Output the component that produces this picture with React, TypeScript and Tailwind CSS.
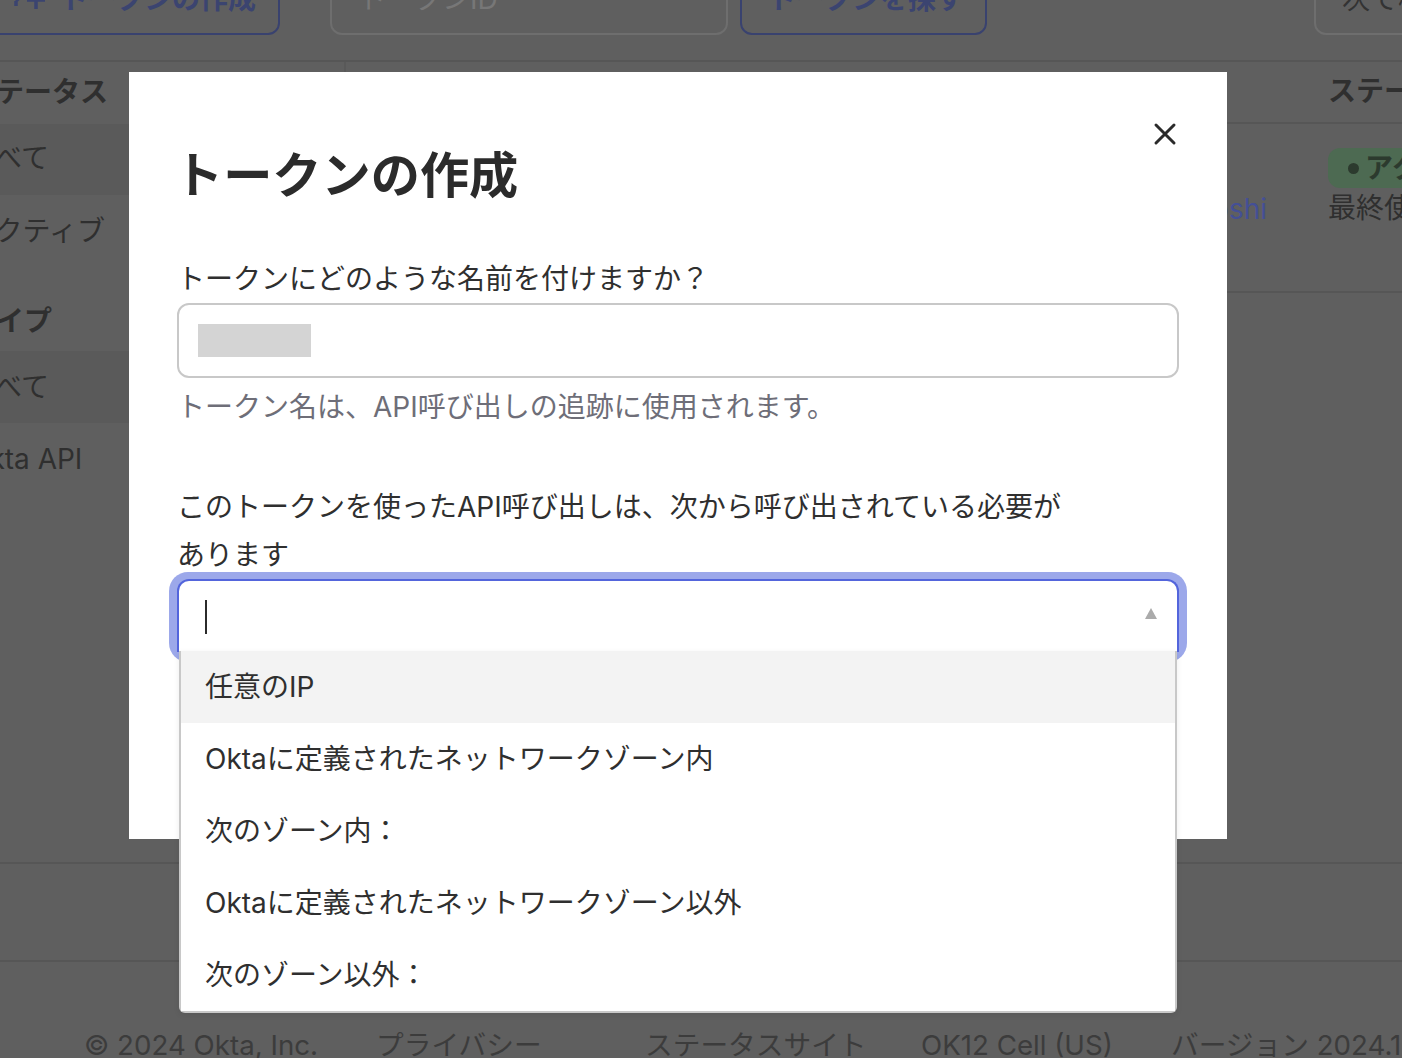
import React from "react";

const font = { fontFamily: '"Inter","Noto Sans CJK JP",sans-serif' };

function Options() {
  const items = [
    "任意のIP",
    "Oktaに定義されたネットワークゾーン内",
    "次のゾーン内：",
    "Oktaに定義されたネットワークゾーン以外",
    "次のゾーン以外：",
  ];
  return (
    <div className="absolute left-[2px] right-[2px] top-[72px] bg-white border-x-2 border-b-2 border-[#c8c8c8] rounded-b-[6px] shadow-[0_2px_6px_rgba(0,0,0,0.08)]">
      {items.map((t, i) => (
        <div key={t} className={`h-[72px] flex items-center pl-[24px] ${i === 0 ? "bg-[#f3f3f3]" : "bg-white"}`}>
          {t}
        </div>
      ))}
    </div>
  );
}

export default function App() {
  return (
    <div style={font} className="relative w-[1402px] h-[1058px] overflow-hidden bg-[#5f5f5f] text-[28px] text-[#2f2f2f]">
      <div className="flex flex-col h-[1095px] -mt-[37px] -ml-[32px] w-[1434px]">
        <div className="h-[99px] shrink-0 border-b-2 border-[#565656] flex items-start whitespace-nowrap">
          <div className="h-[72px] w-[316px] -ml-[4px] shrink-0 border-2 border-[#39426f] rounded-[12px] flex items-center pl-[48px] font-bold text-[#3b4470]">
            <svg className="mr-[14px] shrink-0" width="32" height="32" viewBox="0 0 32 32" fill="none" stroke="#3b4470" strokeWidth="3.5">
              <path d="M2 18 L12 8 M2 18 L2 23" />
              <path d="M22 8 V26 M13 17 H31" />
            </svg>
            <span>トークンの作成</span>
          </div>
          <div className="h-[72px] w-[398px] ml-[50px] shrink-0 border-2 border-[#6e6e6e] rounded-[12px] flex items-center pl-[26px] text-[#777777]">トークンID</div>
          <div className="h-[72px] w-[247px] ml-[12px] shrink-0 border-2 border-[#39426f] rounded-[12px] flex items-center pl-[26px] font-bold text-[#3b4470]">トークンを探す</div>
          <div className="h-[72px] w-[200px] ml-[327px] shrink-0 border-2 border-[#6e6e6e] rounded-[12px] flex items-center pl-[26px] text-[#333333]">次で検索</div>
        </div>

        <div className="h-[800px] shrink-0 flex">
          <div className="w-[378px] shrink-0 border-r-2 border-[#595959]">
            <div className="h-[62px] pb-[2px] flex items-center font-bold">ステータス</div>
            <div className="h-[71px] pb-[3px] flex items-center bg-[#5a5a5a] -mr-[2px]">すべて</div>
            <div className="h-[71px] flex items-center">アクティブ</div>
            <div className="h-[64px] mt-[21px] pt-[4px] flex items-center font-bold">タイプ</div>
            <div className="h-[72px] flex items-center bg-[#5a5a5a] -mr-[2px]">すべて</div>
            <div className="h-[72px] flex items-center">Okta API</div>
          </div>
          <div className="flex-1 min-w-0">
            <div className="h-[62px] pb-[2px] border-b-2 border-[#565656] flex items-center">
              <div className="ml-[982px] font-bold whitespace-nowrap">ステータス</div>
            </div>
            <div className="h-[169px] border-b-2 border-[#565656] flex">
              <div className="w-[921px] shrink-0 pt-[64px] text-right text-[#444f96]">Yoshi</div>
              <div className="ml-[61px] pt-[24px] whitespace-nowrap">
                <div className="h-[40px] w-[200px] rounded-[12px] bg-[#4d6a52] flex items-center pl-[20px] font-bold text-[#2c3a2e]">
                  <span className="w-[11px] h-[11px] rounded-full bg-[#2c3a2e] mr-[6px]" />
                  アクティブ
                </div>
                <div className="leading-[40px]">最終使用</div>
              </div>
            </div>
          </div>
        </div>

        <div className="h-[98px] shrink-0 border-t-2 border-[#565656]" />
        <div className="flex-1 border-t-2 border-[#565656] flex items-end text-[27.7px] text-[#3c3c3c] whitespace-nowrap">
          <div className="flex items-center h-[50px] -mb-[13px] pl-[116px]">
            <span className="w-[292px] shrink-0">© 2024 Okta, Inc.</span>
            <span className="w-[269px] shrink-0">プライバシー</span>
            <span className="w-[276px] shrink-0">ステータスサイト</span>
            <span className="w-[250px] shrink-0">OK12 Cell (US)</span>
            <span>バージョン 2024.1</span>
          </div>
        </div>
      </div>

      <div className="absolute left-[129px] top-[72px] w-[1098px] h-[767px] bg-white pl-[48px] pt-[73px]">
        <svg className="absolute left-[1024px] top-[50px]" width="24" height="24" viewBox="0 0 24 24" fill="none" stroke="#2b2b2b" strokeWidth="3" strokeLinecap="round">
          <path d="M3 3 L21 21 M21 3 L3 21" />
        </svg>
        <h1 className="-ml-[3px] text-[49.2px] leading-[60px] font-bold text-[#2b2b2b]">トークンの作成</h1>
        <div className="mt-[50px] leading-[48px]">トークンにどのような名前を付けますか？</div>
        <div className="w-[1002px] h-[75px] border-2 border-[#c8c8c8] rounded-[12px] flex items-center pl-[19px]">
          <div className="w-[113px] h-[33px] bg-[#d4d4d4]" />
        </div>
        <div className="mt-[5px] leading-[48px] text-[#6e6e78]">トークン名は、API呼び出しの追跡に使用されます。</div>
        <div className="mt-[52px] leading-[48px] w-[890px]">このトークンを使ったAPI呼び出しは、次から呼び出されている必要があります</div>
        <div className="relative w-[1002px] h-[73px]">
          <div className="absolute -left-[8px] -right-[8px] -top-[7px] h-[90px] rounded-[19px] bg-[#9ca8ea]" />
          <div className="relative h-[73px] border-2 border-b-0 border-[#5365dc] rounded-t-[12px] bg-white">
            <div className="absolute left-[26px] top-[19px] w-[2px] h-[34px] bg-[#2b2b2b]" />
            <svg className="absolute left-[966px] top-[27px]" width="12" height="11" viewBox="0 0 12 11">
              <path d="M6 0 L12 11 L0 11 Z" fill="#ababab" />
            </svg>
          </div>
          <Options />
        </div>
      </div>
    </div>
  );
}
